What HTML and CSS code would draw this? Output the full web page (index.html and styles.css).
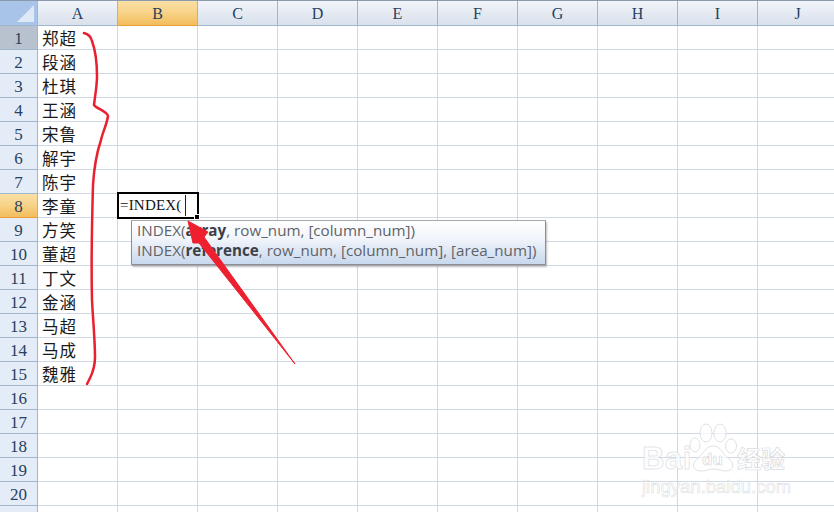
FILE: index.html
```html
<!DOCTYPE html>
<html lang="zh">
<head>
<meta charset="utf-8">
<title>INDEX</title>
<link rel="stylesheet" href="styles.css">
</head>
<body>
<div class="sheet">
<table class="grid">
<colgroup><col class="col-head"><col class="col"><col class="col"><col class="col"><col class="col"><col class="col"><col class="col"><col class="col"><col class="col"><col class="col"><col class="col"></colgroup>
<thead><tr class="head-row"><th class="corner"><span class="corner-mark"></span></th><th class="ch">A</th><th class="ch ch-on">B</th><th class="ch">C</th><th class="ch">D</th><th class="ch">E</th><th class="ch">F</th><th class="ch">G</th><th class="ch">H</th><th class="ch">I</th><th class="ch">J</th></tr></thead>
<tbody>
<tr><th class="rh rh-dim">1</th><td class="name">郑超</td><td></td><td></td><td></td><td></td><td></td><td></td><td></td><td></td><td></td></tr>
<tr><th class="rh">2</th><td class="name">段涵</td><td></td><td></td><td></td><td></td><td></td><td></td><td></td><td></td><td></td></tr>
<tr><th class="rh">3</th><td class="name">杜琪</td><td></td><td></td><td></td><td></td><td></td><td></td><td></td><td></td><td></td></tr>
<tr><th class="rh">4</th><td class="name">王涵</td><td></td><td></td><td></td><td></td><td></td><td></td><td></td><td></td><td></td></tr>
<tr><th class="rh">5</th><td class="name">宋鲁</td><td></td><td></td><td></td><td></td><td></td><td></td><td></td><td></td><td></td></tr>
<tr><th class="rh">6</th><td class="name">解宇</td><td></td><td></td><td></td><td></td><td></td><td></td><td></td><td></td><td></td></tr>
<tr><th class="rh">7</th><td class="name">陈宇</td><td></td><td></td><td></td><td></td><td></td><td></td><td></td><td></td><td></td></tr>
<tr><th class="rh rh-on">8</th><td class="name">李童</td><td></td><td></td><td></td><td></td><td></td><td></td><td></td><td></td><td></td></tr>
<tr><th class="rh">9</th><td class="name">方笑</td><td></td><td></td><td></td><td></td><td></td><td></td><td></td><td></td><td></td></tr>
<tr><th class="rh">10</th><td class="name">董超</td><td></td><td></td><td></td><td></td><td></td><td></td><td></td><td></td><td></td></tr>
<tr><th class="rh">11</th><td class="name">丁文</td><td></td><td></td><td></td><td></td><td></td><td></td><td></td><td></td><td></td></tr>
<tr><th class="rh">12</th><td class="name">金涵</td><td></td><td></td><td></td><td></td><td></td><td></td><td></td><td></td><td></td></tr>
<tr><th class="rh">13</th><td class="name">马超</td><td></td><td></td><td></td><td></td><td></td><td></td><td></td><td></td><td></td></tr>
<tr><th class="rh">14</th><td class="name">马成</td><td></td><td></td><td></td><td></td><td></td><td></td><td></td><td></td><td></td></tr>
<tr><th class="rh">15</th><td class="name">魏雅</td><td></td><td></td><td></td><td></td><td></td><td></td><td></td><td></td><td></td></tr>
<tr><th class="rh">16</th><td></td><td></td><td></td><td></td><td></td><td></td><td></td><td></td><td></td><td></td></tr>
<tr><th class="rh">17</th><td></td><td></td><td></td><td></td><td></td><td></td><td></td><td></td><td></td><td></td></tr>
<tr><th class="rh">18</th><td></td><td></td><td></td><td></td><td></td><td></td><td></td><td></td><td></td><td></td></tr>
<tr><th class="rh">19</th><td></td><td></td><td></td><td></td><td></td><td></td><td></td><td></td><td></td><td></td></tr>
<tr><th class="rh">20</th><td></td><td></td><td></td><td></td><td></td><td></td><td></td><td></td><td></td><td></td></tr>
<tr><th class="rh"></th><td></td><td></td><td></td><td></td><td></td><td></td><td></td><td></td><td></td><td></td></tr>
</tbody>
</table>

<div class="editor"><span class="formula">=INDEX(</span><span class="caret"></span><span class="handle"></span></div>

<div class="tip">
  <div class="tip-line">INDEX(<b>array</b>, row_num, [column_num])</div>
  <div class="tip-line">INDEX(<b>reference</b>, row_num, [column_num], [area_num])</div>
</div>

<svg class="marks" viewBox="0 0 834 512" aria-hidden="true">
  <path class="brace" d="M84 33 C88 34 91 37 92 41 C96 52 97 64 97 76 C97 86 95 96 94 105 C97 109 107 111 108 116 C107 124 103 131 101 140 C97 152 94 168 93 185 C92 220 91 260 92 300 C93 320 95 340 95 357 C95 367 92 374 90 378 C89 380 88 382 87 384"/>
  <polygon class="arrow" points="188,221 208,232 204,237 295,364 199,243 193,243"/>
</svg>

<div class="mark-wm">
  <span class="wm-logo">Bai</span>
  <svg class="wm-paw" viewBox="0 0 48 50" aria-hidden="true">
    <ellipse cx="6" cy="23" rx="5" ry="7"/>
    <ellipse cx="17" cy="11" rx="6" ry="9"/>
    <ellipse cx="31" cy="11" rx="6" ry="9"/>
    <ellipse cx="42" cy="24" rx="5.500" ry="7"/>
    <path d="M24 24 C16 24 14 33 7 38 C2 43 5 49 12 49 C18 49 20 47 24 47 C28 47 32 49 37 49 C44 49 46 42 41 38 C34 33 32 24 24 24 Z"/>
  </svg>
  <span class="wm-du">du</span>
  <span class="wm-cn">经验</span>
  <div class="wm-url">jingyan.baidu.com</div>
</div>
</div>
</body>
</html>
```
FILE: styles.css
```css
* { box-sizing: border-box; }
html, body { margin: 0; height: 100%; overflow: hidden; background: #fff; }
.sheet { position: relative; width: 834px; height: 512px; overflow: hidden; border-top: 1px solid #8a99ad; }
.grid { border-collapse: separate; border-spacing: 0; table-layout: fixed; width: 838px; }
.col-head { width: 38px; }
.col { width: 80px; }
.grid th, .grid td { padding: 0; border-right: 1px solid #d0d7e5; border-bottom: 1px solid #d0d7e5; height: 24px; font-weight: 400; }
.grid .head-row th { height: 25px; }
.corner { position: relative; background: #a9c4e9; border-right: 1px solid #9eb6ce !important; border-bottom: 1px solid #9eb6ce !important; }
.corner-mark { position: absolute; right: 3px; bottom: 3px; width: 0; height: 0; border-style: solid; border-width: 0 0 17px 17px; border-color: transparent transparent #dfe8f5 transparent; }
.grid .ch { font: 16px "Liberation Serif", serif; color: #27415f; padding-top: 2px; background: linear-gradient(#f2f5fa, #e6ebf3 45%, #d9e1ec); border-right-color: #9eb6ce; border-bottom-color: #9eb6ce; text-align: center; }
.grid .ch-on { background: linear-gradient(#f9dfa4, #f8d48b 45%, #f2bd5c); border-right-color: #f0a840; border-bottom-color: #eba035; }
.grid .rh { font: 17px "Liberation Serif", serif; color: #27415f; padding-top: 2px; background: #e4ecf7; border-right-color: #9eb6ce; border-bottom-color: #9eb6ce; text-align: center; }
.grid .rh-dim { background: #b8c2ce; }
.grid .rh-on { background: linear-gradient(#f9dfa4, #f8d48b 45%, #f2bd5c); border-right-color: #f0a840; border-bottom-color: #eba035; }
.grid .name { font: 16.500px "Noto Sans CJK SC", sans-serif; color: #1a1a1a; padding: 1px 0 0 4px; letter-spacing: 1px; line-height: 22px; white-space: nowrap; overflow: hidden; }
.editor { position: absolute; left: 117px; top: 191px; width: 82px; height: 27px; border: 2px solid #000; background: #fff; display: flex; align-items: center; padding-left: 1px; }
.formula { font: 15px "Liberation Serif", serif; color: #111; letter-spacing: .2px; white-space: nowrap; }
.caret { position: absolute; left: 66px; top: 1px; width: 1px; height: 21px; background: #222; }
.handle { position: absolute; right: -3px; bottom: -3px; width: 6px; height: 6px; background: #000; border: 1px solid #fff; }
.tip { position: absolute; left: 131px; top: 219px; width: 415px; height: 45px; padding: 0 5px; border: 1px solid #8e8e8e; border-top-color: #a8a8a8; border-radius: 1px; background: linear-gradient(#fff, #f2f5fb 40%, #c8d8ee); box-shadow: 1px 2px 2px rgba(90, 90, 90, .4); font: 15.200px "Open Sans", "Liberation Sans", sans-serif; color: #5f6368; }
.tip-line { height: 20px; line-height: 19px; white-space: nowrap; }
.tip b { color: #3c4046; font-weight: 700; }
.marks { position: absolute; left: 0; top: -1px; width: 834px; height: 512px; pointer-events: none; }
.brace { fill: none; stroke: #e8202f; stroke-width: 2.500px; stroke-linecap: round; stroke-linejoin: round; }
.arrow { fill: #ee2030; stroke: #ee2030; stroke-width: 1; stroke-linejoin: round; }
.mark-wm { position: absolute; left: 642px; top: 421px; width: 150px; height: 72px; color: rgba(255, 255, 255, .8); }
.wm-logo { position: absolute; left: 0; top: 22px; font: 700 31px/30px "Liberation Sans", sans-serif; letter-spacing: .5px; -webkit-text-stroke: 1px rgba(220, 223, 229, .8); }
.wm-paw { position: absolute; left: 47px; top: 0; width: 48px; height: 50px; fill: rgba(255, 255, 255, .7); stroke: #dfe1e6; stroke-width: 1; }
.wm-du { position: absolute; left: 60px; top: 28px; font: 700 17px/20px "Liberation Sans", sans-serif; -webkit-text-stroke: .7px #d8dbe0; }
.wm-cn { position: absolute; left: 95px; top: 22px; font: 700 24px/28px "Noto Sans CJK SC", sans-serif; white-space: nowrap; -webkit-text-stroke: .7px #d8dbe0; }
.wm-url { position: absolute; left: 0; top: 55px; font: 400 18.500px/20px "Liberation Sans", sans-serif; white-space: nowrap; -webkit-text-stroke: .6px #dcdfe4; color: rgba(255, 255, 255, .6); }
```
